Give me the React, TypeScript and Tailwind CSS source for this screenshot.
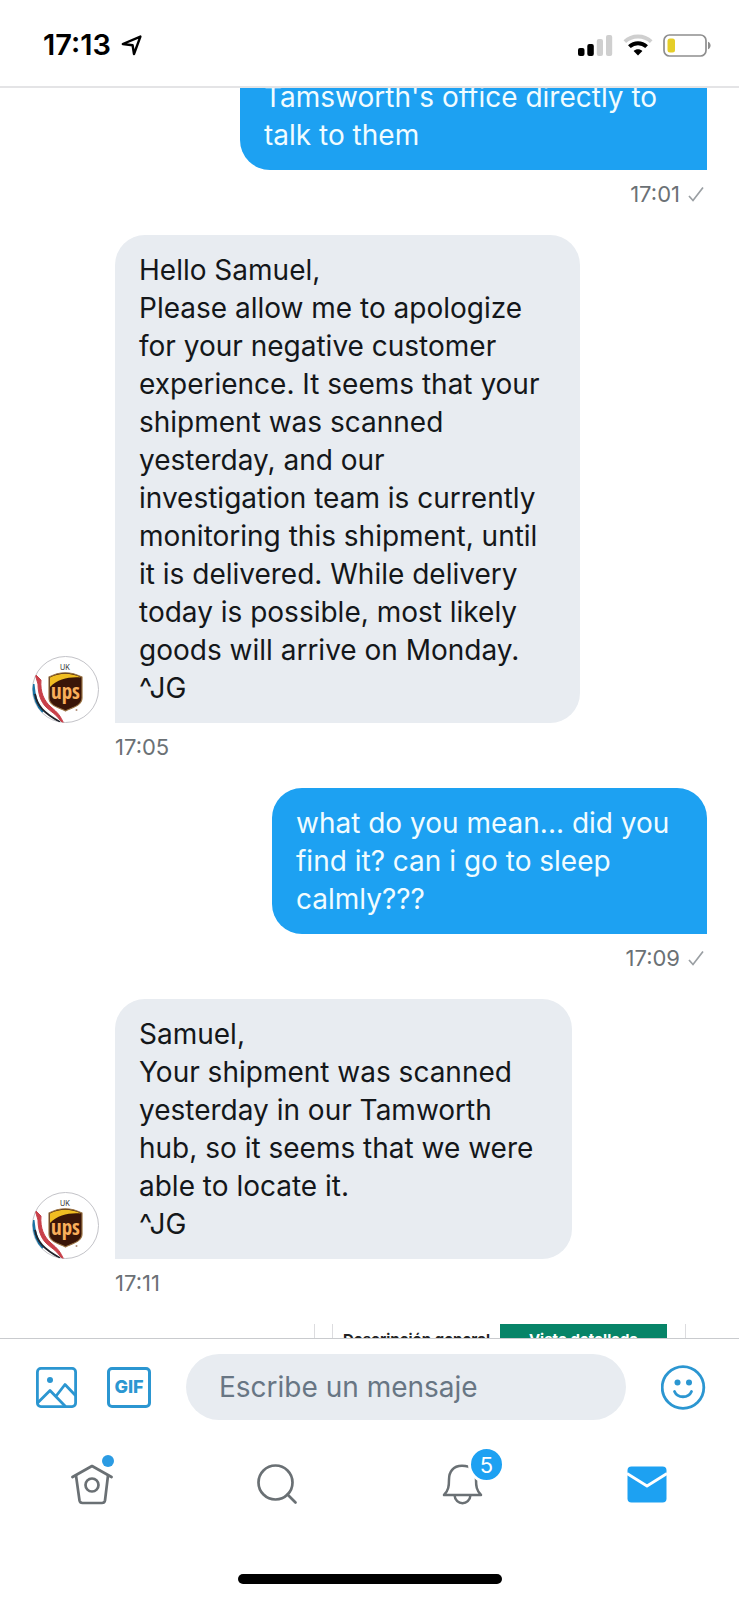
import { useState } from 'react';

interface Message {
  id: number;
  text: string;
  time: string;
  mine: boolean;
  width: string;
}

const messages: Message[] = [
  {
    id: 1,
    text: "Tamsworth's office directly to\ntalk to them",
    time: '17:01',
    mine: true,
    width: 'w-[467px]',
  },
  {
    id: 2,
    text: 'Hello Samuel,\nPlease allow me to apologize\nfor your negative customer\nexperience. It seems that your\nshipment was scanned\nyesterday, and our\ninvestigation team is currently\nmonitoring this shipment, until\nit is delivered. While delivery\ntoday is possible, most likely\ngoods will arrive on Monday.\n^JG',
    time: '17:05',
    mine: false,
    width: 'w-[465px]',
  },
  {
    id: 3,
    text: 'what do you mean... did you\nfind it? can i go to sleep\ncalmly???',
    time: '17:09',
    mine: true,
    width: 'w-[435px]',
  },
  {
    id: 4,
    text: 'Samuel,\nYour shipment was scanned\nyesterday in our Tamworth\nhub, so it seems that we were\nable to locate it.\n^JG',
    time: '17:11',
    mine: false,
    width: 'w-[457px]',
  },
];

const StatusBar = () => (
  <header className="flex h-[88px] shrink-0 items-center justify-between border-b-2 border-[#e4e4e6] bg-white pt-1 pr-7 pl-[43px]">
    <div className="flex items-center gap-2.5">
      <span className="text-[29px] leading-8 font-semibold text-black">17:13</span>
      <svg width="21" height="21" viewBox="0 0 21 21" fill="none" stroke="#000" strokeWidth="2.4" strokeLinejoin="round">
        <path d="M19.4 1.6 13 19 11.6 10.2 1.8 9Z" />
      </svg>
    </div>
    <div className="flex items-center gap-2.5">
      <svg width="35" height="22" viewBox="0 0 35 22">
        <rect x="0" y="14" width="6.5" height="8" rx="2" fill="#000" />
        <rect x="9.3" y="10" width="6.5" height="12" rx="2" fill="#000" />
        <rect x="18.8" y="5" width="6.2" height="17" rx="2" fill="#cfcfcf" />
        <rect x="28" y="1" width="6.2" height="21" rx="2" fill="#cfcfcf" />
      </svg>
      <svg width="30" height="22" viewBox="0 0 30 22" fill="none">
        <path d="M1.8 7.6C9 .8 21 .8 28.2 7.6" stroke="#cfcfcf" strokeWidth="3.8" />
        <path d="M6.4 12.6c5-4.6 12.2-4.6 17.2 0" stroke="#000" strokeWidth="4" />
        <path d="M15 21.5 10.6 17c2.4-2.4 6.4-2.4 8.8 0Z" fill="#000" />
      </svg>
      <svg width="48" height="23" viewBox="0 0 48 23" fill="none">
        <rect x="1" y="1" width="42" height="21" rx="5.5" stroke="#8e8e8e" strokeWidth="1.7" />
        <rect x="4.5" y="4.5" width="7.5" height="14" rx="2.5" fill="#e5ce28" />
        <path d="M45 7.8c3.4 1 3.4 6.4 0 7.4Z" fill="#8e8e8e" />
      </svg>
    </div>
  </header>
);

const Avatar = () => (
  <svg className="shrink-0" width="67" height="67" viewBox="0 0 67 67" role="img" aria-label="UPS UK">
    <defs>
      <clipPath id="avatarClip">
        <circle cx="33.5" cy="33.5" r="33" />
      </clipPath>
    </defs>
    <circle cx="33.5" cy="33.5" r="33" fill="#fff" stroke="#c3c3c8" strokeWidth="1" />
    <g clipPath="url(#avatarClip)" fill="none">
      <path d="M1 28C2 42 5 50 11 56" stroke="#1873a5" strokeWidth="3" />
      <path d="M3 38C5 50 12 57 28 66" stroke="#20232b" strokeWidth="1.8" />
      <path d="M3 18 9 24C8 36 12 45 19 51S28 59 32 68L28 64C24 58 19 56 14 51S6 38 6 28Z" fill="#c8404a" stroke="#c8404a" />
    </g>
    <text x="33" y="14" textAnchor="middle" fontSize="7" fill="#333" fontFamily="Inter, sans-serif">UK</text>
    <path d="M17 21Q33 12.5 50 21V42C50 49 42 51 33.5 55C25 51 17 49 17 42Z" fill="#3a1508" stroke="#9a7445" strokeWidth="1.2" />
    <path d="M18 21.5Q33 14 49 21.5C37 20.5 26 23 18 31Z" fill="#f0bd22" />
    <text x="33.5" y="43" textAnchor="middle" fontSize="21" fontWeight="700" fill="#f9ae5b" fontFamily="'Liberation Sans Narrow', 'Open Sans Condensed', 'Roboto Condensed', sans-serif">ups</text>
    <circle cx="44.5" cy="54" r="1" fill="#b08b75" />
  </svg>
);

const MessageRow = ({ msg }: { msg: Message }) => (
  <div className={`flex flex-col ${msg.mine ? 'items-end' : 'items-start'}`}>
    <div className="flex max-w-full items-end gap-4">
      {!msg.mine && <Avatar />}
      <p
        className={`max-w-full px-6 text-[28px] leading-[38px] whitespace-pre-line ${msg.width} ${
          msg.mine ? 'bg-[#1da1f2] text-[#f1fcff] rounded-bl-[30px]' : 'bg-[#e8ecf1] text-[#14171a] rounded-t-[30px] rounded-br-[30px]'
        } ${msg.id === 1 ? 'pb-4' : 'py-4'} ${msg.mine && msg.id !== 1 ? 'rounded-t-[30px]' : ''}`}
      >
        {msg.text}
      </p>
    </div>
    <div className={`flex items-center gap-2 pt-2 text-[22px] leading-8 text-[#6b7175] ${msg.mine ? 'pr-[3px]' : 'pl-[83px]'}`}>
      <time>{msg.time}</time>
      {msg.mine && (
        <svg width="16" height="16" viewBox="0 0 16 16" fill="none" stroke="#9a9fa3" strokeWidth="1.7">
          <path d="M1 10 5 14.5 15 1.5" />
        </svg>
      )}
    </div>
  </div>
);

const Attachment = () => (
  <div className="flex w-[393px] max-w-full shrink-0 self-end border-l border-[#dcdcdf] pr-[21px] pl-[17px]">
    <div className="flex flex-1 justify-end border-x border-[#dcdcdf] pr-[18px] text-[15px] leading-6 font-bold whitespace-nowrap">
      <span className="flex-1 pt-1 text-center text-[#222]">Descripción general</span>
      <span className="w-[167px] bg-[#078468] pt-1 text-center text-white">Vista detallada</span>
    </div>
  </div>
);

const Composer = () => {
  const [texto, setTexto] = useState<string>('');

  return (
    <form className="flex items-center pt-[15px] pr-[33px] pl-9" onSubmit={(e) => e.preventDefault()}>
      <button type="button" aria-label="Foto" className="mr-[30px]">
        <svg width="41" height="41" viewBox="0 0 41 41" fill="none" stroke="#2b96d1" strokeWidth="2.8" strokeLinejoin="round">
          <rect x="1.4" y="1.4" width="38.2" height="38.2" rx="3.5" />
          <circle cx="14" cy="13" r="3" fill="#2b96d1" stroke="none" />
          <path d="M1.5 36 14 23.5 29.5 39.5M20.5 28.5 29 17.5 39.5 28.5" />
        </svg>
      </button>
      <button
        type="button"
        className="mr-[35px] flex h-[41px] w-11 items-center justify-center rounded-[5px] border-[3px] border-[#2b96d1] text-[18px] leading-5 font-extrabold text-[#2b96d1]"
      >
        GIF
      </button>
      <input
        type="text"
        aria-label="Escribe un mensaje"
        placeholder="Escribe un mensaje"
        value={texto}
        onChange={(e) => setTexto(e.target.value)}
        className="h-[66px] min-w-0 flex-1 rounded-full bg-[#e8ecf1] px-[33px] text-[28px] leading-9 text-[#14171a] outline-none placeholder:text-[#687684]"
      />
      <button type="button" aria-label="Emoji" className="ml-[35px]">
        <svg width="45" height="45" viewBox="0 0 45 45" fill="none" stroke="#2b96d1" strokeWidth="2.8" strokeLinecap="round">
          <circle cx="22" cy="22.5" r="20.8" />
          <circle cx="16.5" cy="17.5" r="3" fill="#2b96d1" stroke="none" />
          <circle cx="28" cy="17.5" r="3" fill="#2b96d1" stroke="none" />
          <path d="M13.5 26.5c3 7 14 7 17 0" />
        </svg>
      </button>
    </form>
  );
};

const NavBar = () => (
  <nav className="flex pt-[43px]">
    <a href="#inicio" aria-label="Inicio" className="flex flex-1 justify-center">
      <span className="relative">
        <svg width="42" height="42" viewBox="0 0 42 42" fill="none" stroke="#6a7074" strokeWidth="2.7" strokeLinecap="round" strokeLinejoin="round">
          <path d="M1.5 14 21 3 40.5 14" />
          <path d="M5 12.5 8.5 37.5Q9 40 11.5 40H31Q33.5 40 34 37.5L37 12.5" />
          <circle cx="21" cy="22" r="6.5" />
        </svg>
        <span className="absolute -top-2 -right-px size-3 rounded-full bg-[#2b9be3]" />
      </span>
    </a>
    <a href="#buscar" aria-label="Buscar" className="flex flex-1 justify-center">
      <svg width="42" height="42" viewBox="0 0 42 42" fill="none" stroke="#6a7074" strokeWidth="2.7" strokeLinecap="round">
        <circle cx="19.5" cy="19.5" r="17" />
        <path d="m31.5 31.5 8 8" />
      </svg>
    </a>
    <a href="#notificaciones" aria-label="Notificaciones" className="flex flex-1 justify-center">
      <span className="relative">
        <svg width="42" height="42" viewBox="0 0 42 42" fill="none" stroke="#6a7074" strokeWidth="2.5" strokeLinejoin="round">
          <path d="M21 2.8C12 2.8 8 9 8 16.5 8 23 7.5 27.5 3 32H40C35.5 27.5 35 23 35 16.5 35 9 31 2.8 21 2.8Z" />
          <path d="M13.5 32c.7 11 15.3 11 16 0" />
        </svg>
        <span className="absolute -top-[17px] -right-[22px] flex size-[37px] items-center justify-center rounded-full border-[3px] border-white bg-[#1da1f2] text-[22px] leading-6 text-white">
          5
        </span>
      </span>
    </a>
    <a href="#mensajes" aria-label="Mensajes" className="flex flex-1 justify-center">
      <svg width="42" height="42" viewBox="0 0 42 42" fill="none">
        <rect x="1.5" y="3.5" width="39" height="36" rx="4" fill="#1da1f2" />
        <path d="M1 10.5 21 23 41 10.5" stroke="#fff" strokeWidth="2.8" strokeLinejoin="round" />
      </svg>
    </a>
  </nav>
);

export default function App() {
  return (
    <div className="flex h-screen flex-col overflow-hidden bg-white font-['Inter',sans-serif]">
      <StatusBar />
      <main className="min-h-0 flex-1 overflow-hidden px-8">
        <div className="-mt-[10px] flex flex-col gap-[25px]">
          {messages.map((msg) => (
            <MessageRow key={msg.id} msg={msg} />
          ))}
          <Attachment />
        </div>
      </main>
      <footer className="shrink-0 border-t border-[#c9cbce] bg-white">
        <Composer />
        <NavBar />
        <div className="flex justify-center pt-[69px] pb-4">
          <div className="h-2.5 w-[264px] rounded-full bg-black" />
        </div>
      </footer>
    </div>
  );
}
